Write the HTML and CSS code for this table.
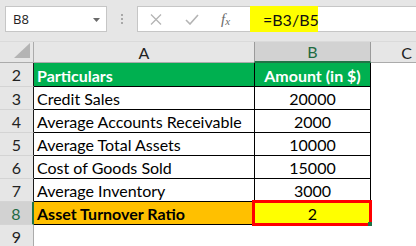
FILE: index.html
```html
<!DOCTYPE html>
<html>
<head>
<meta charset="utf-8">
<link rel="stylesheet" href="styles.css">
</head>
<body>
<div class="app">
  <div class="bar">
    <div class="namebox">
      <span class="nb-text">B8</span>
      <svg class="caret" width="7" height="4" viewBox="0 0 7 4"><path d="M0 0H7L3.5 4Z" fill="#6a6a6a"/></svg>
    </div>
    <div class="dots"><i></i><i></i><i></i></div>
    <div class="fbox">
      <div class="fbtns">
        <svg class="ico-x" width="12" height="11" viewBox="0 0 12 11"><path d="M1 0.5L11 10.5M11 0.5L1 10.5" stroke="#b4b4b4" stroke-width="1.3" fill="none"/></svg>
        <svg class="ico-ok" width="14" height="11" viewBox="0 0 14 11"><path d="M1 6L5 10L13 1" stroke="#b4b4b4" stroke-width="1.6" fill="none"/></svg>
        <span class="fx">f<sub>x</sub></span>
      </div>
      <div class="formula"><span class="hl">=B3/B5</span></div>
    </div>
  </div>
  <div class="grid">
    <div class="corner"><svg width="16" height="15" viewBox="0 0 16 15"><path d="M16 0V15H0Z" fill="#b4b4b4"/></svg></div>
    <div class="colhdr">A</div>
    <div class="colhdr sel">B</div>
    <div class="colhdr last">C</div>

    <div class="rowhdr tb">2</div>
    <div class="cell head left">Particulars</div>
    <div class="cell head num">Amount (in $)</div>
    <div class="blank"></div>

    <div class="rowhdr tb">3</div>
    <div class="cell left">Credit Sales</div>
    <div class="cell num">20000</div>
    <div class="blank"></div>

    <div class="rowhdr tb">4</div>
    <div class="cell left">Average Accounts Receivable</div>
    <div class="cell num">2000</div>
    <div class="blank"></div>

    <div class="rowhdr tb">5</div>
    <div class="cell left">Average Total Assets</div>
    <div class="cell num">10000</div>
    <div class="blank"></div>

    <div class="rowhdr tb">6</div>
    <div class="cell left">Cost of Goods Sold</div>
    <div class="cell num">15000</div>
    <div class="blank"></div>

    <div class="rowhdr tb">7</div>
    <div class="cell left">Average Inventory</div>
    <div class="cell num">3000</div>
    <div class="blank"></div>

    <div class="rowhdr tb selrow">8</div>
    <div class="cell left result">Asset Turnover Ratio</div>
    <div class="cell num answer">2<span class="handle"></span></div>
    <div class="blank"></div>

    <div class="rowhdr">9</div>
    <div class="blank"></div>
    <div class="blank"></div>
    <div class="blank"></div>
  </div>
</div>
</body>
</html>
```
FILE: styles.css
```css
* { box-sizing: border-box; }
html, body { margin: 0; padding: 0; }
body {
  width: 416px;
  height: 246px;
  overflow: hidden;
  background: #ffffff;
  font-family: Lato, "Liberation Sans", sans-serif;
}
.app { width: 416px; }

.bar {
  height: 42px;
  background: #e6e6e6;
  display: flex;
  align-items: flex-start;
  padding-top: 6px;
  border-bottom: 1px solid #dadada;
}
.namebox {
  margin-left: 5px;
  width: 102px;
  height: 26px;
  background: #fff;
  border: 1px solid #c6c6c6;
  display: flex;
  align-items: center;
  justify-content: space-between;
  padding: 0 6px 0 7px;
}
.nb-text {
  font-family: "Open Sans", "Liberation Sans", sans-serif;
  font-size: 13px;
  color: #222;
}
.caret { margin-top: 1px; }
.dots {
  width: 30px;
  height: 26px;
  display: flex;
  flex-direction: column;
  align-items: center;
  justify-content: center;
  gap: 2px;
}
.dots i {
  display: block;
  width: 2px;
  height: 2px;
  background: #a8a8a8;
}
.fbox {
  flex: 1;
  height: 26px;
  background: #fff;
  border: 1px solid #c6c6c6;
  border-right: none;
  display: flex;
  align-items: stretch;
}
.fbtns {
  width: 112px;
  display: flex;
  align-items: center;
  padding-left: 12px;
}
.ico-x { margin-right: 23px; }
.ico-ok { margin-right: 22px; }
.fx {
  font-family: "Liberation Serif", "DejaVu Serif", serif;
  font-style: italic;
  font-size: 15px;
  color: #6a6a6a;
  line-height: 1;
}
.fx sub { font-size: 11px; vertical-align: -1px; }
.formula { flex: 1; display: flex; margin: -1px 0; }
.hl {
  background: #ffff00;
  width: 68px;
  padding-left: 13px;
  display: flex;
  align-items: center;
  font-size: 16px;
  color: #111;
}

.grid {
  display: grid;
  grid-template-columns: 34px 221px 116px 45px;
  grid-template-rows: 21px 24px repeat(7, 23px);
}
.corner {
  background: #e6e6e6;
  border-right: 1px solid #ababab;
  border-bottom: 1px solid #ababab;
  display: flex;
  align-items: flex-end;
  justify-content: flex-end;
  padding: 0 3px 4px 0;
}
.colhdr {
  background: #e6e6e6;
  border-right: 1px solid #c8c8c8;
  border-bottom: 1px solid #ababab;
  display: flex;
  align-items: center;
  justify-content: center;
  font-size: 16px;
  color: #222;
}
.colhdr.sel {
  background: #d2d2d2;
  color: #1e6b42;
  border-left: 1px solid #9b9b9b;
  border-right: 1px solid #9b9b9b;
  border-bottom: 2px solid #217346;
  margin-left: -1px;
}
.colhdr.last { justify-content: flex-end; padding-right: 4px; border-right: none; }
.rowhdr {
  background: #e6e6e6;
  border-right: 1px solid #ababab;
  border-bottom: 1px solid #d4d4d4;
  display: flex;
  align-items: center;
  justify-content: center;
  font-size: 16px;
  color: #222;
}
.rowhdr.tb { border-right-color: #1a1a1a; }
.rowhdr.selrow {
  background: #d2d2d2;
  color: #1e6b42;
  border-right: 2px solid #217346;
}
.cell {
  border-right: 1px solid #000;
  border-bottom: 1px solid #000;
  display: flex;
  align-items: center;
  font-size: 16px;
  color: #000;
  white-space: nowrap;
  position: relative;
}
.cell.left { padding-left: 3px; padding-top: 1px; }
.cell.num { justify-content: center; padding-top: 1px; }
.cell.head {
  background: #00b050;
  color: #fff;
  font-weight: 700;
}
.cell.result {
  background: #ffc000;
  font-weight: 700;
}
.cell.answer { background: #ffff00; }
.cell.answer::after {
  content: "";
  position: absolute;
  left: -3px;
  right: -2px;
  top: -2px;
  bottom: -2px;
  border: 3px solid #ff0000;
}
.handle {
  position: absolute;
  right: -2px;
  bottom: -2px;
  width: 4px;
  height: 4px;
  background: #217346;
  z-index: 2;
}
.blank { background: #fff; }
```
